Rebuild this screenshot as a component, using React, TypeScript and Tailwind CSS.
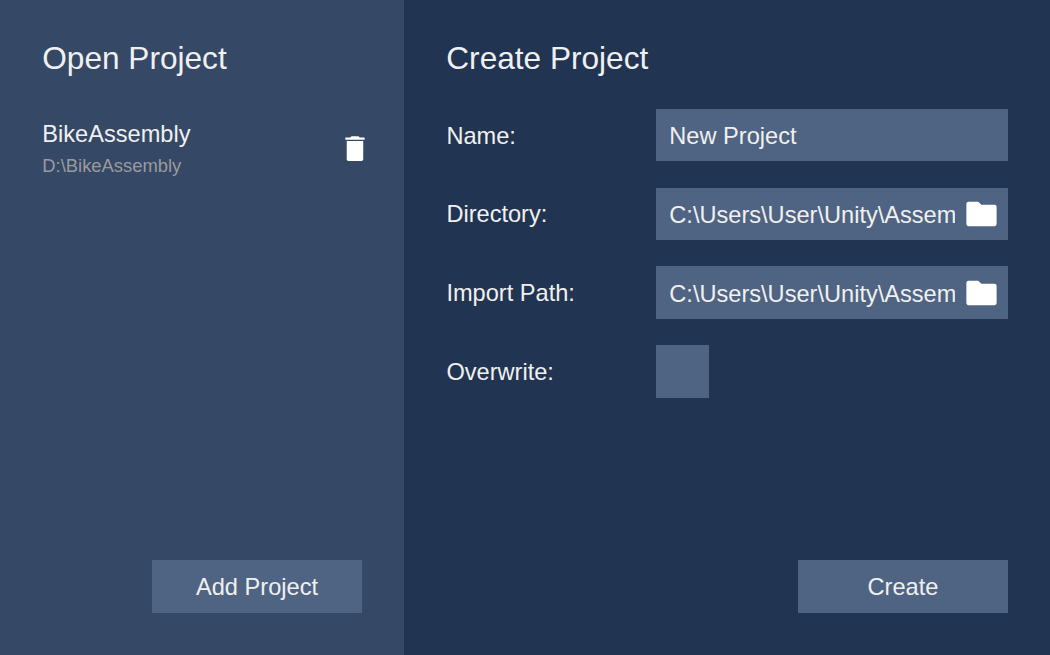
import React from "react";

function TrashIcon() {
  return (
    <svg className="h-[33px] w-[33px]" viewBox="-0.35 0 24 24" fill="#ffffff">
      <path d="M6 19.9c0 .7.5 1.1 1.2 1.1h9.6c.7 0 1.2-.4 1.2-1.1V6.6H6v13.3zM19 4h-3.5l-1-1h-5l-1 1H5v1.7h14V4z" />
    </svg>
  );
}

function FolderIcon() {
  return (
    <svg className="h-[37px] w-[37px]" viewBox="0 -0.2 24 24" fill="#ffffff">
      <path d="M9.9 4.2H3.6c-.8 0-1.4.6-1.4 1.4v13c0 .8.6 1.4 1.4 1.4h16.8c.8 0 1.4-.6 1.4-1.4v-11c0-.8-.6-1.4-1.4-1.4H11.9l-2-2z" />
    </svg>
  );
}

function Row({ label, children }: { label: string; children: React.ReactNode }) {
  return (
    <div className="flex h-[52.5px] items-center">
      <label className="w-[210px] shrink-0 whitespace-nowrap pl-[0.4px] pt-px">{label}</label>
      {children}
    </div>
  );
}

function PathField({ value }: { value: string }) {
  return (
    <div className="flex h-full w-[352px] items-center bg-[#4f6482] pl-[13.3px] pr-[7.8px]">
      <span className="w-[285.7px] overflow-hidden whitespace-nowrap pt-[2px]">{value}</span>
      <button className="ml-auto">
        <FolderIcon />
      </button>
    </div>
  );
}

export default function App() {
  return (
    <div className="flex h-[655px] w-[1050px] overflow-hidden font-['Liberation_Sans',sans-serif] text-[23.6px] leading-[28px] text-[#f0f0f0]">
      <section className="flex w-[404px] shrink-0 flex-col bg-[#354865] px-[42px] pb-[42px] pt-[38px]">
        <h1 className="pl-[0.3px] text-[31.6px] leading-[40px]">Open Project</h1>
        <div className="mt-[42px] flex justify-between">
          <div className="pl-[0.3px]">
            <div>BikeAssembly</div>
            <div className="mt-[6px] text-[18.4px] leading-[24px] text-[#9b9b9b]">D:\BikeAssembly</div>
          </div>
          <button className="-mr-[9px] mt-[12px] self-start">
            <TrashIcon />
          </button>
        </div>
        <button className="mt-auto h-[53px] w-[210px] self-end bg-[#4f6482]">Add Project</button>
      </section>
      <section className="flex grow flex-col bg-[#213451] px-[42px] pb-[42px] pt-[38px]">
        <h1 className="pl-[0.3px] text-[31.6px] leading-[40px]">Create Project</h1>
        <div className="mt-[30.75px] flex flex-col gap-[26.25px]">
          <Row label="Name:">
            <div className="flex h-full w-[352px] items-center bg-[#4f6482] pl-[13.3px] pt-[2px]">New Project</div>
          </Row>
          <Row label="Directory:">
            <PathField value="C:\Users\User\Unity\Assem" />
          </Row>
          <Row label="Import Path:">
            <PathField value="C:\Users\User\Unity\Assem" />
          </Row>
          <Row label="Overwrite:">
            <button className="h-full w-[53px] bg-[#4f6482]" aria-label="Overwrite" />
          </Row>
        </div>
        <button className="mt-auto h-[53px] w-[210px] self-end bg-[#4f6482]">Create</button>
      </section>
    </div>
  );
}
